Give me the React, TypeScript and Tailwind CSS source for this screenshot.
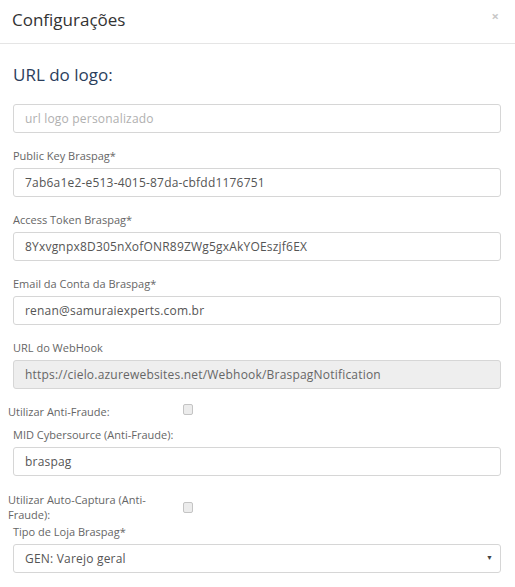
import React from 'react';

const font = { fontFamily: '"Open Sans", "Noto Sans", sans-serif' };

interface FieldProps {
  label: string,
  value?: string,
  placeholder?: string,
  disabled?: boolean,
}

const Field: React.FC<FieldProps> = ({ label, value, placeholder, disabled }) => (
  <div className="mb-[16px]">
    <label className="block h-[14px] mb-[5px] text-[11px] leading-[14px] text-[#666]">{label}</label>
    <input
      type="text"
      readOnly
      disabled={disabled}
      defaultValue={value}
      placeholder={placeholder}
      className={`block w-full h-[29px] px-[11px] border border-[#d6d6d6] rounded-[3px] text-[12px] tracking-[0.2px] text-[#555] placeholder:text-[#aaa] outline-none ${disabled ? 'bg-[#eee] text-[#666]' : 'bg-white'}`}
    />
  </div>
);

const Check: React.FC = () => (
  <input
    type="checkbox"
    className="appearance-none w-[10px] h-[11px] border border-[#c4c4c4] rounded-[2px] bg-[#ececec]"
  />
);

const App: React.FC = () => {
  return (
    <div className="w-[515px] h-[587px] bg-white overflow-hidden" style={font}>
      {/* Header */}
      <div className="h-[44px] border-b border-[#e5e5e5] flex items-center justify-between pl-[12px] pr-[16px]">
        <h4 className="-mt-[3px] text-[17px] text-[#333]">Configurações</h4>
        <span className="text-[13px] font-bold text-[#c8c8c8] -mt-[10px]">×</span>
      </div>

      <div className="pl-[13px] pr-[14px]">
        <h3 className="mt-[21px] mb-[19px] h-[20px] text-[17px] leading-[20px] text-[#2b3e5c]">URL do logo:</h3>
        <div className="mb-[16px]">
          <input
            type="text"
            placeholder="url logo personalizado"
            className="block w-full h-[29px] px-[11px] border border-[#d6d6d6] rounded-[3px] text-[12px] tracking-[0.2px] text-[#555] placeholder:text-[#b0b0b0] outline-none"
          />
        </div>

        <Field label="Public Key Braspag*" value="7ab6a1e2-e513-4015-87da-cbfdd1176751" />
        <Field label="Access Token Braspag*" value="8Yxvgnpx8D305nXofONR89ZWg5gxAkYOEszjf6EX" />
        <Field label="Email da Conta da Braspag*" value="renan@samuraiexperts.com.br" />
        <Field label="URL do WebHook" value="https://cielo.azurewebsites.net/Webhook/BraspagNotification" disabled />

        {/* Anti-Fraude */}
        <div className="-ml-[5px] -mt-[1px] mb-[9px] flex items-center">
          <span className="w-[175px] text-[11px] leading-[15px] text-[#666]">Utilizar Anti-Fraude:</span>
          <span className="-mt-[4px] flex"><Check /></span>
        </div>

        <Field label="MID Cybersource (Anti-Fraude):" value="braspag" />

        {/* Auto-Captura */}
        <div className="-ml-[5px] mt-[1px] mb-[3px] flex items-center">
          <span className="w-[175px] pr-[22px] text-[11px] leading-[15px] text-[#666]">Utilizar Auto-Captura (Anti-Fraude):</span>
          <span className="flex"><Check /></span>
        </div>

        <div>
          <label className="block h-[14px] mb-[5px] text-[11px] leading-[14px] text-[#666]">Tipo de Loja Braspag*</label>
          <div className="relative">
            <select className="block w-full h-[29px] pl-[11px] border border-[#d6d6d6] rounded-[3px] text-[12px] tracking-[0.2px] text-[#555] bg-white outline-none appearance-none">
              <option>GEN: Varejo geral</option>
            </select>
            <span className="absolute right-[8px] top-[9px] text-[7px] text-[#444]">▼</span>
          </div>
        </div>
      </div>
    </div>
  );
};

export default App;
